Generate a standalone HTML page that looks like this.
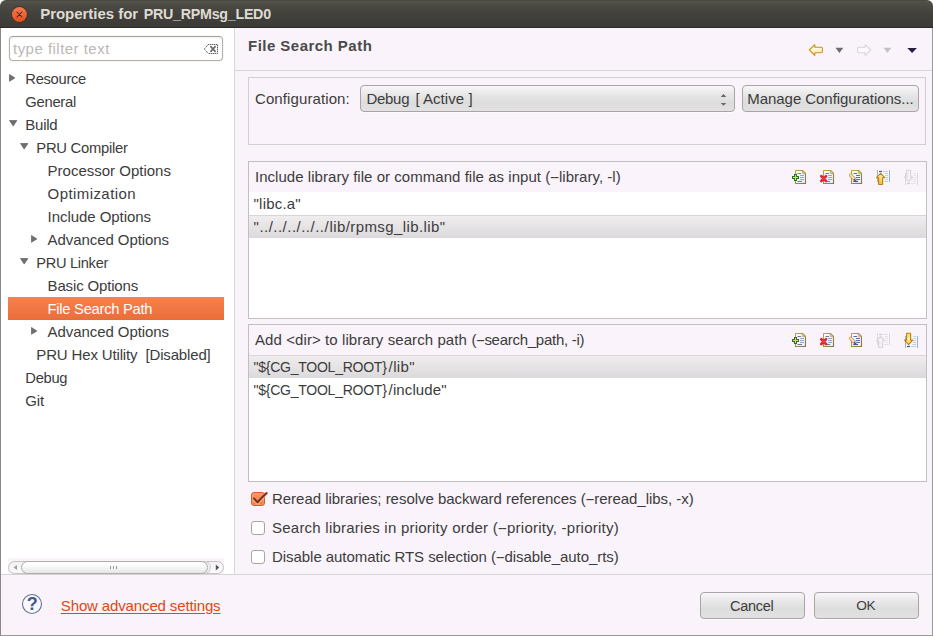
<!DOCTYPE html>
<html><head><meta charset="utf-8"><title>Properties</title>
<style>
html,body{margin:0;padding:0;}
body{width:933px;height:636px;overflow:hidden;background:#fff;font-family:"Liberation Sans",sans-serif;position:relative;}
.t{position:absolute;white-space:pre;line-height:20px;font-family:"Liberation Sans",sans-serif;}
.abs{position:absolute;}
</style></head><body>

<svg width="0" height="0" style="position:absolute"><defs>
<linearGradient id="docs" x1="0" y1="0" x2="1" y2="1"><stop offset="0" stop-color="#c9a242"/><stop offset="1" stop-color="#86743f"/></linearGradient>
<linearGradient id="docf" x1="0" y1="0" x2="1" y2="1"><stop offset="0" stop-color="#ffffff"/><stop offset="1" stop-color="#e4ebf8"/></linearGradient>
<linearGradient id="arr" x1="0" y1="0" x2="0" y2="1"><stop offset="0" stop-color="#fff8c8"/><stop offset="1" stop-color="#f7b92a"/></linearGradient>
<linearGradient id="arrd" x1="0" y1="0" x2="0" y2="1"><stop offset="0" stop-color="#fbd45a"/><stop offset="0.5" stop-color="#fff2b0"/><stop offset="1" stop-color="#f9c53a"/></linearGradient>
</defs></svg>
<div class="abs" style="left:0;top:0;width:933px;height:636px;background-color:#f9f3fa;background-image:repeating-conic-gradient(#fcf1fc 0% 25%, #f6f5f7 0% 50%);background-size:2px 2px;border-radius:6px 6px 0 0;"></div>
<div class="abs" style="left:0;top:0;width:933px;height:28px;border-radius:6px 6px 0 0;background:linear-gradient(#3f3e39 0,#54534b 1px,#4b4a43 5px,#42413c 14px,#3c3b37 26px);border-bottom:1px solid #2b2a27;box-sizing:border-box;"></div>
<svg class="abs" style="left:10px;top:5px" width="19" height="19" viewBox="0 0 19 19">
<defs><linearGradient id="cg" x1="0" y1="0" x2="0" y2="1"><stop offset="0" stop-color="#f47a52"/><stop offset="1" stop-color="#e54f1d"/></linearGradient></defs>
<circle cx="9.4" cy="9.5" r="8.2" fill="#35302b"/>
<circle cx="9.4" cy="9.5" r="7.5" fill="url(#cg)"/>
<path d="M6.9 7 L11.9 12 M11.9 7 L6.9 12" stroke="#4a2415" stroke-width="1.05" stroke-linecap="round"/>
</svg>
<div class="t" style="left:40.20px;top:3.60px;font-size:15px;font-weight:bold;color:#dfdbd2;letter-spacing:-0.028px;">Properties for</div>
<div class="t" style="left:143.80px;top:3.85px;font-size:14.29px;font-weight:bold;color:#dfdbd2;letter-spacing:-0.280px;">PRU_RPMsg_LED0</div>
<div style="position:absolute;left:1px;top:28px;width:233px;height:546px;background:#fff;"></div>
<div style="position:absolute;left:234px;top:28px;width:1px;height:546px;background:#dad6da;"></div>
<div style="position:absolute;left:0px;top:28px;width:1px;height:608px;background:#8a8784;"></div>
<div style="position:absolute;left:932px;top:28px;width:1px;height:608px;background:#9c9a98;"></div>
<div style="position:absolute;left:0px;top:635px;width:933px;height:1px;background:#9c9a98;"></div>
<div style="position:absolute;left:9px;top:36px;width:214px;height:25px;box-sizing:border-box;border:1px solid #b5afa8;border-top-color:#aaa49d;border-radius:4px;background:#fff;box-shadow:inset 0 1px 1px rgba(0,0,0,0.06), 0 0 0 1px rgba(120,100,120,0.05);"></div>
<div class="t" style="left:13.00px;top:39.10px;font-size:15px;font-weight:normal;color:#bdb8b4;letter-spacing:0.473px;">type filter text</div>
<svg class="abs" style="left:203px;top:43px" width="17" height="13" viewBox="0 0 17 13">
<path d="M5.2 1.5 H14.5 V10.5 H5.2 L1.3 6 Z" fill="#fff" stroke="#3c3c3c" stroke-width="1" stroke-dasharray="1.1 0.9"/>
<path d="M7.4 3.2 L12.6 8.8 M12.6 3.2 L7.4 8.8" stroke="#6c6c6c" stroke-width="1.7"/>
</svg>
<div class="t" style="left:25.30px;top:69.20px;font-size:14.71px;font-weight:normal;color:#3c3c3c;letter-spacing:-0.280px;">Resource</div>
<svg class="abs" style="left:9.1px;top:73.6px" width="7" height="8" viewBox="0 0 7 8"><path d="M0.5 0.5 L5.9 3.9 L0.5 7.3 Z" fill="#6f6f6f" stroke="#555" stroke-width="0.6"/></svg>
<div class="t" style="left:25.30px;top:92.17px;font-size:14.8px;font-weight:normal;color:#3c3c3c;letter-spacing:-0.280px;">General</div>
<div class="t" style="left:25.30px;top:115.10px;font-size:15px;font-weight:normal;color:#3c3c3c;letter-spacing:-0.240px;">Build</div>
<svg class="abs" style="left:8.7px;top:119.7px" width="9" height="7" viewBox="0 0 9 7"><path d="M0.5 0.5 L7.9 0.5 L4.2 6.1 Z" fill="#6f6f6f" stroke="#555" stroke-width="0.6"/></svg>
<div class="t" style="left:36.30px;top:138.16px;font-size:14.82px;font-weight:normal;color:#3c3c3c;letter-spacing:-0.280px;">PRU Compiler</div>
<svg class="abs" style="left:19.7px;top:142.7px" width="9" height="7" viewBox="0 0 9 7"><path d="M0.5 0.5 L7.9 0.5 L4.2 6.1 Z" fill="#6f6f6f" stroke="#555" stroke-width="0.6"/></svg>
<div class="t" style="left:47.60px;top:161.10px;font-size:15px;font-weight:normal;color:#3c3c3c;letter-spacing:-0.006px;">Processor Options</div>
<div class="t" style="left:47.60px;top:184.10px;font-size:15px;font-weight:normal;color:#3c3c3c;letter-spacing:0.420px;">Optimization</div>
<div class="t" style="left:47.60px;top:207.10px;font-size:15px;font-weight:normal;color:#3c3c3c;letter-spacing:-0.052px;">Include Options</div>
<div class="t" style="left:47.60px;top:230.10px;font-size:15px;font-weight:normal;color:#3c3c3c;letter-spacing:-0.072px;">Advanced Options</div>
<svg class="abs" style="left:31.0px;top:234.6px" width="7" height="8" viewBox="0 0 7 8"><path d="M0.5 0.5 L5.9 3.9 L0.5 7.3 Z" fill="#6f6f6f" stroke="#555" stroke-width="0.6"/></svg>
<div class="t" style="left:36.30px;top:253.24px;font-size:14.59px;font-weight:normal;color:#3c3c3c;letter-spacing:-0.280px;">PRU Linker</div>
<svg class="abs" style="left:19.7px;top:257.7px" width="9" height="7" viewBox="0 0 9 7"><path d="M0.5 0.5 L7.9 0.5 L4.2 6.1 Z" fill="#6f6f6f" stroke="#555" stroke-width="0.6"/></svg>
<div class="t" style="left:47.60px;top:276.10px;font-size:15px;font-weight:normal;color:#3c3c3c;letter-spacing:-0.162px;">Basic Options</div>
<div style="position:absolute;left:8px;top:297px;width:216px;height:23px;background:linear-gradient(#f68250,#f17743 50%,#eb6e3b 96%,#e76833);"></div>
<div class="t" style="left:47.60px;top:299.18px;font-size:14.77px;font-weight:normal;color:#fff;letter-spacing:-0.280px;">File Search Path</div>
<div class="t" style="left:47.60px;top:322.10px;font-size:15px;font-weight:normal;color:#3c3c3c;letter-spacing:-0.072px;">Advanced Options</div>
<svg class="abs" style="left:31.0px;top:326.6px" width="7" height="8" viewBox="0 0 7 8"><path d="M0.5 0.5 L5.9 3.9 L0.5 7.3 Z" fill="#6f6f6f" stroke="#555" stroke-width="0.6"/></svg>
<div class="t" style="left:36.30px;top:345.10px;font-size:15px;font-weight:normal;color:#3c3c3c;letter-spacing:-0.150px;">PRU Hex Utility  [Disabled]</div>
<div class="t" style="left:25.30px;top:368.20px;font-size:14.73px;font-weight:normal;color:#3c3c3c;letter-spacing:-0.280px;">Debug</div>
<div class="t" style="left:25.30px;top:391.10px;font-size:15px;font-weight:normal;color:#3c3c3c;letter-spacing:-0.186px;">Git</div>
<div style="position:absolute;left:8px;top:558px;width:216px;height:16px;background-color:#f9f3fa;background-image:repeating-conic-gradient(#fcf1fc 0% 25%, #f6f5f7 0% 50%);background-size:2px 2px;"></div>
<div style="position:absolute;left:8px;top:561px;width:216px;height:13px;box-sizing:border-box;border:1px solid #c6c2c4;border-radius:7px;background:linear-gradient(#f3f2f3,#fbfbfb);"></div>
<div style="position:absolute;left:196px;top:561px;width:15px;height:13px;box-sizing:border-box;border:1px solid #cfcbcd;border-left:none;border-radius:0 7px 7px 0;background:#efedef;"></div>
<div style="position:absolute;left:21px;top:561px;width:187px;height:13px;box-sizing:border-box;border:1px solid #b2aba8;border-radius:7px;background:linear-gradient(#ffffff 20%,#e7e5e7);"></div>
<svg class="abs" style="left:12px;top:563px" width="6" height="9" viewBox="0 0 6 9"><path d="M5 2 L1.6 4.5 L5 7 Z" fill="#a2a0a2"/></svg>
<svg class="abs" style="left:214px;top:563px" width="6" height="9" viewBox="0 0 6 9"><path d="M1.8 1.6 L5.2 4.5 L1.8 7.4 Z" fill="#555355"/></svg>
<div style="position:absolute;left:110px;top:566px;width:1px;height:3px;background:#9a9a9a;"></div>
<div style="position:absolute;left:113px;top:566px;width:1px;height:3px;background:#9a9a9a;"></div>
<div style="position:absolute;left:116px;top:566px;width:1px;height:3px;background:#9a9a9a;"></div>
<div class="t" style="left:248.00px;top:35.80px;font-size:15px;font-weight:bold;color:#4a4a4a;letter-spacing:0.472px;">File Search Path</div>
<div style="position:absolute;left:235px;top:70px;width:697px;height:1px;background:#d9d4da;"></div>
<svg class="abs" style="left:808px;top:43px" width="16" height="14" viewBox="0 0 16 14">
<defs><linearGradient id="yg" x1="0" y1="0" x2="0" y2="1"><stop offset="0" stop-color="#fffdf0"/><stop offset="1" stop-color="#fee9a4"/></linearGradient></defs>
<path d="M6.8 1.7 L1.3 7 L6.8 12.3 L6.8 9.7 L13.2 9.7 Q14.4 9.7 14.4 8.5 L14.4 5.5 Q14.4 4.3 13.2 4.3 L6.8 4.3 Z" fill="url(#yg)" stroke="#c9921c" stroke-width="1.1" stroke-linejoin="round"/></svg>
<svg class="abs" style="left:835px;top:47px" width="9" height="7" viewBox="0 0 9 7"><path d="M0.5 0.8 L8.3 0.8 L4.4 6 Z" fill="#6e6c70"/></svg>
<svg class="abs" style="left:856px;top:43px" width="16" height="14" viewBox="0 0 16 14">
<path d="M9.2 1.7 L14.7 7 L9.2 12.3 L9.2 9.7 L2.8 9.7 Q1.6 9.7 1.6 8.5 L1.6 5.5 Q1.6 4.3 2.8 4.3 L9.2 4.3 Z" fill="#fcfafd" stroke="#d9d5da" stroke-width="1.1" stroke-linejoin="round"/></svg>
<svg class="abs" style="left:883px;top:47px" width="9" height="7" viewBox="0 0 9 7"><path d="M0.5 0.8 L8.3 0.8 L4.4 6 Z" fill="#c4c1c6"/></svg>
<svg class="abs" style="left:907px;top:47px" width="11" height="7" viewBox="0 0 11 7"><path d="M0.3 0.9 L9.9 0.9 L5.1 6 Z" fill="#2a1c44"/></svg>
<div style="position:absolute;left:248px;top:77px;width:678px;height:68px;box-sizing:border-box;border:1px solid #d3ced4;"></div>
<div class="t" style="left:255.00px;top:89.20px;font-size:15px;font-weight:normal;color:#3c3c3c;letter-spacing:0.100px;">Configuration:</div>
<div style="position:absolute;left:360px;top:85px;width:375px;height:27px;box-sizing:border-box;border:1px solid #a9a4a6;border-radius:4px;background:linear-gradient(#f8f6f8 0%,#e8e7e8 35%,#dcdddc 65%,#e3e1e3 100%);box-shadow:0 1px 0 rgba(255,255,255,0.7);"></div>
<div class="t" style="left:366.50px;top:88.71px;font-size:14.97px;font-weight:normal;color:#3c3c3c;letter-spacing:-0.280px;">Debug</div>
<div class="t" style="left:415.40px;top:88.70px;font-size:15px;font-weight:normal;color:#3c3c3c;letter-spacing:0.055px;">[ Active ]</div>
<svg class="abs" style="left:720px;top:93px" width="7" height="14" viewBox="0 0 7 14"><path d="M0.7 3.9 L3.5 1 L6.3 3.9 Z M0.7 9.9 L3.5 12.8 L6.3 9.9 Z" fill="#686868"/></svg>
<div style="position:absolute;left:742px;top:85px;width:177px;height:27px;box-sizing:border-box;border:1px solid #a9a4a6;border-radius:4px;background:linear-gradient(#f8f6f8 0%,#e8e7e8 35%,#dcdddc 65%,#e3e1e3 100%);"></div>
<div class="t" style="left:747.30px;top:88.80px;font-size:15px;font-weight:normal;color:#3c3c3c;letter-spacing:-0.053px;">Manage Configurations...</div>
<div style="position:absolute;left:248px;top:161px;width:679px;height:158px;box-sizing:border-box;border:1px solid #c2bec1;"></div>
<div class="t" style="left:255.00px;top:167.00px;font-size:15px;font-weight:normal;color:#3c3c3c;letter-spacing:0.038px;">Include library file or command file as input (<span style="letter-spacing:-1.362px">-</span>-library, -l)</div>
<div style="position:absolute;left:249px;top:192px;width:677px;height:126px;background:#fff;"></div>
<div class="t" style="left:253.60px;top:193.80px;font-size:15px;font-weight:normal;color:#3c3c3c;letter-spacing:0.190px;">&quot;libc.a&quot;</div>
<div style="position:absolute;left:249px;top:215px;width:677px;height:23px;background:linear-gradient(#f0edf0 0%,#e7e4e5 45%,#dbd9dc 100%);border-top:1px solid #dad6d5;box-sizing:border-box;"></div>
<div class="t" style="left:253.60px;top:216.80px;font-size:15px;font-weight:normal;color:#3c3c3c;letter-spacing:0.477px;">&quot;../../../../../</div>
<div class="t" style="left:329.60px;top:216.80px;font-size:15px;font-weight:normal;color:#3c3c3c;letter-spacing:0.394px;">lib/rpmsg_lib.lib&quot;</div>
<svg class="abs" style="left:791px;top:169px" width="16" height="17" viewBox="0 0 16 17"><path d="M4.5 1.5 H11.5 L14.5 4.5 V14.5 H4.5 Z" fill="url(#docf)" stroke="url(#docs)" stroke-width="1.1" stroke-linejoin="round"/><path d="M11.3 1.8 V4.7 H14.2 Z" fill="#e6d39a" stroke="#b79a4a" stroke-width="0.6"/><path d="M6.5 4.5 H10" stroke="#5f7ab4" stroke-width="1"/><path d="M9 6.5 H13 M9 8.5 H13 M9 10.5 H13" stroke="#93a6d0" stroke-width="1"/><path d="M6.5 12.5 H11" stroke="#5f7ab4" stroke-width="1"/><path d="M3 5 H6 V7 H8 V10 H6 V12 H3 V10 H1 V7 H3 Z" fill="#1b7a30"/><path d="M4 6 H5 V8 H7 V9 H5 V11 H4 V9 H2 V8 H4 Z" fill="#cfe25c"/></svg><svg class="abs" style="left:819px;top:169px" width="16" height="17" viewBox="0 0 16 17"><path d="M4.5 1.5 H11.5 L14.5 4.5 V14.5 H4.5 Z" fill="url(#docf)" stroke="url(#docs)" stroke-width="1.1" stroke-linejoin="round"/><path d="M11.3 1.8 V4.7 H14.2 Z" fill="#e6d39a" stroke="#b79a4a" stroke-width="0.6"/><path d="M6.5 4.5 H10" stroke="#5f7ab4" stroke-width="1"/><path d="M9 6.5 H13 M9 8.5 H13 M9 10.5 H13" stroke="#93a6d0" stroke-width="1"/><path d="M6.5 12.5 H11" stroke="#5f7ab4" stroke-width="1"/><path d="M2.3 7.3 L7 12 M7 7.3 L2.3 12" stroke="#d9253a" stroke-width="2.7" stroke-linecap="round"/><path d="M2.9 7.9 L6.4 11.4 M6.4 7.9 L2.9 11.4" stroke="#ee5a68" stroke-width="1" stroke-linecap="butt" opacity="0.7"/></svg><svg class="abs" style="left:847px;top:169px" width="16" height="17" viewBox="0 0 16 17"><path d="M4.5 1.5 H11.5 L14.5 4.5 V14.5 H4.5 Z" fill="url(#docf)" stroke="url(#docs)" stroke-width="1.1" stroke-linejoin="round"/><path d="M11.3 1.8 V4.7 H14.2 Z" fill="#e6d39a" stroke="#b79a4a" stroke-width="0.6"/><path d="M6.5 4.5 H10" stroke="#4f6aa8" stroke-width="1"/><path d="M9 6.5 H13 M9 8.5 H13 M9 10.5 H13" stroke="#5872b0" stroke-width="1"/><path d="M6.5 12.5 H11" stroke="#4f6aa8" stroke-width="1"/><path d="M3.7 6.2 L8 10.6" stroke="#b48c48" stroke-width="3.4" stroke-linecap="round"/><path d="M3.7 6.2 L7.8 10.4" stroke="#f6e2b4" stroke-width="2.1" stroke-linecap="round"/><path d="M7.4 9.6 L9.6 12.4 L6.4 10.9 Z" fill="#2f3f66"/><path d="M6.5 12.5 H11" stroke="#3f5a9a" stroke-width="1.2"/></svg><svg class="abs" style="left:875px;top:169px" width="16" height="17" viewBox="0 0 16 17"><rect x="3" y="1" width="11" height="12" fill="#f2f5fc"/><path d="M2.5 1 V13 M14.5 1 V13" stroke="#9fb0cc" stroke-width="1"/><path d="M8 2.5 H13 M10 4.5 H13 M10.5 6.5 H13 M10.5 8.5 H13 M10.5 10.5 H13 M9 12.5 H13" stroke="#c3cce2" stroke-width="1"/><path d="M4 2.5 H7" stroke="#2f5fa8" stroke-width="1.2"/><path d="M5.6 4.3 L9.7 8.7 L7.6 8.7 L7.6 15 Q7.6 15.5 7.1 15.5 L4.1 15.5 Q3.6 15.5 3.6 15 L3.6 8.7 L1.5 8.7 Z" fill="url(#arr)" stroke="#c27f08" stroke-width="1.1" stroke-linejoin="round"/></svg><svg class="abs" style="left:903px;top:169px" width="16" height="17" viewBox="0 0 16 17"><path d="M2.5 4 V16 M14.5 4 V16" stroke="#dcd8de" stroke-width="1"/><path d="M10.5 4.5 H13 M10.5 6.5 H13 M10.5 8.5 H13 M10 10.5 H13 M9.5 12.5 H13 M8 14.5 H13" stroke="#e6e2e8" stroke-width="1"/><path d="M4 14.5 H7" stroke="#cfcbd2" stroke-width="1.2"/><path d="M5.6 12.6 L9.7 8.1 L7.6 8.1 L7.6 1.8 Q7.6 1.3 7.1 1.3 L4.1 1.3 Q3.6 1.3 3.6 1.8 L3.6 8.1 L1.5 8.1 Z" fill="#f4f0f5" stroke="#d9d5db" stroke-width="1.1" stroke-linejoin="round"/></svg>
<div style="position:absolute;left:248px;top:324px;width:679px;height:158px;box-sizing:border-box;border:1px solid #c2bec1;"></div>
<div class="t" style="left:255.00px;top:330.00px;font-size:15px;font-weight:normal;color:#3c3c3c;letter-spacing:0.084px;">Add &lt;dir&gt; to library search path</div>
<div class="t" style="left:471.60px;top:330.00px;font-size:15px;font-weight:normal;color:#3c3c3c;letter-spacing:-0.272px;">(<span style="letter-spacing:-1.672px">-</span>-search_path, -i)</div>
<div style="position:absolute;left:249px;top:355px;width:677px;height:126px;background:#fff;"></div>
<div style="position:absolute;left:249px;top:355px;width:677px;height:23px;background:linear-gradient(#f0edf0 0%,#e7e4e5 45%,#dbd9dc 100%);border-top:1px solid #dad6d5;box-sizing:border-box;"></div>
<div class="t" style="left:253.60px;top:357.13px;font-size:14.06px;font-weight:normal;color:#3c3c3c;letter-spacing:-0.280px;">&quot;${CG_TOOL_ROOT}</div>
<div class="t" style="left:388.60px;top:356.80px;font-size:15px;font-weight:normal;color:#3c3c3c;letter-spacing:0.375px;">/lib&quot;</div>
<div class="t" style="left:253.60px;top:380.13px;font-size:14.06px;font-weight:normal;color:#3c3c3c;letter-spacing:-0.280px;">&quot;${CG_TOOL_ROOT}</div>
<div class="t" style="left:388.60px;top:379.80px;font-size:15px;font-weight:normal;color:#3c3c3c;letter-spacing:0.121px;">/include&quot;</div>
<svg class="abs" style="left:791px;top:332px" width="16" height="17" viewBox="0 0 16 17"><path d="M4.5 1.5 H11.5 L14.5 4.5 V14.5 H4.5 Z" fill="url(#docf)" stroke="url(#docs)" stroke-width="1.1" stroke-linejoin="round"/><path d="M11.3 1.8 V4.7 H14.2 Z" fill="#e6d39a" stroke="#b79a4a" stroke-width="0.6"/><path d="M6.5 4.5 H10" stroke="#5f7ab4" stroke-width="1"/><path d="M9 6.5 H13 M9 8.5 H13 M9 10.5 H13" stroke="#93a6d0" stroke-width="1"/><path d="M6.5 12.5 H11" stroke="#5f7ab4" stroke-width="1"/><path d="M3 5 H6 V7 H8 V10 H6 V12 H3 V10 H1 V7 H3 Z" fill="#1b7a30"/><path d="M4 6 H5 V8 H7 V9 H5 V11 H4 V9 H2 V8 H4 Z" fill="#cfe25c"/></svg><svg class="abs" style="left:819px;top:332px" width="16" height="17" viewBox="0 0 16 17"><path d="M4.5 1.5 H11.5 L14.5 4.5 V14.5 H4.5 Z" fill="url(#docf)" stroke="url(#docs)" stroke-width="1.1" stroke-linejoin="round"/><path d="M11.3 1.8 V4.7 H14.2 Z" fill="#e6d39a" stroke="#b79a4a" stroke-width="0.6"/><path d="M6.5 4.5 H10" stroke="#5f7ab4" stroke-width="1"/><path d="M9 6.5 H13 M9 8.5 H13 M9 10.5 H13" stroke="#93a6d0" stroke-width="1"/><path d="M6.5 12.5 H11" stroke="#5f7ab4" stroke-width="1"/><path d="M2.3 7.3 L7 12 M7 7.3 L2.3 12" stroke="#d9253a" stroke-width="2.7" stroke-linecap="round"/><path d="M2.9 7.9 L6.4 11.4 M6.4 7.9 L2.9 11.4" stroke="#ee5a68" stroke-width="1" stroke-linecap="butt" opacity="0.7"/></svg><svg class="abs" style="left:847px;top:332px" width="16" height="17" viewBox="0 0 16 17"><path d="M4.5 1.5 H11.5 L14.5 4.5 V14.5 H4.5 Z" fill="url(#docf)" stroke="url(#docs)" stroke-width="1.1" stroke-linejoin="round"/><path d="M11.3 1.8 V4.7 H14.2 Z" fill="#e6d39a" stroke="#b79a4a" stroke-width="0.6"/><path d="M6.5 4.5 H10" stroke="#4f6aa8" stroke-width="1"/><path d="M9 6.5 H13 M9 8.5 H13 M9 10.5 H13" stroke="#5872b0" stroke-width="1"/><path d="M6.5 12.5 H11" stroke="#4f6aa8" stroke-width="1"/><path d="M3.7 6.2 L8 10.6" stroke="#b48c48" stroke-width="3.4" stroke-linecap="round"/><path d="M3.7 6.2 L7.8 10.4" stroke="#f6e2b4" stroke-width="2.1" stroke-linecap="round"/><path d="M7.4 9.6 L9.6 12.4 L6.4 10.9 Z" fill="#2f3f66"/><path d="M6.5 12.5 H11" stroke="#3f5a9a" stroke-width="1.2"/></svg><svg class="abs" style="left:875px;top:332px" width="16" height="17" viewBox="0 0 16 17"><path d="M2.5 1 V13 M14.5 1 V13" stroke="#dcd8de" stroke-width="1"/><path d="M8 2.5 H13 M10 4.5 H13 M10.5 6.5 H13 M10.5 8.5 H13 M10.5 10.5 H13 M9 12.5 H13" stroke="#e6e2e8" stroke-width="1"/><path d="M4 2.5 H7" stroke="#cfcbd2" stroke-width="1.2"/><path d="M5.6 4.3 L9.7 8.7 L7.6 8.7 L7.6 15 Q7.6 15.5 7.1 15.5 L4.1 15.5 Q3.6 15.5 3.6 15 L3.6 8.7 L1.5 8.7 Z" fill="#f4f0f5" stroke="#d9d5db" stroke-width="1.1" stroke-linejoin="round"/></svg><svg class="abs" style="left:903px;top:332px" width="16" height="17" viewBox="0 0 16 17"><rect x="3" y="4" width="11" height="12" fill="#f2f5fc"/><path d="M2.5 4 V16 M14.5 4 V16" stroke="#9fb0cc" stroke-width="1"/><path d="M10.5 4.5 H13 M10.5 6.5 H13 M10.5 8.5 H13 M10 10.5 H13 M9.5 12.5 H13 M8 14.5 H13" stroke="#c3cce2" stroke-width="1"/><path d="M4 14.5 H7" stroke="#2f5fa8" stroke-width="1.2"/><path d="M5.6 12.6 L9.7 8.1 L7.6 8.1 L7.6 1.8 Q7.6 1.3 7.1 1.3 L4.1 1.3 Q3.6 1.3 3.6 1.8 L3.6 8.1 L1.5 8.1 Z" fill="url(#arrd)" stroke="#c27f08" stroke-width="1.1" stroke-linejoin="round"/></svg>
<div style="position:absolute;left:251px;top:492px;width:14px;height:14px;box-sizing:border-box;border:1px solid #d85a2c;border-radius:3px;background:linear-gradient(#f9976a,#f17b45);box-shadow:inset 0 0 0 1px rgba(255,190,150,0.35);"></div>
<svg class="abs" style="left:251px;top:491px" width="18" height="16" viewBox="0 0 18 16"><path d="M3 7.9 L6.6 11.3 L15.4 2.3" fill="none" stroke="#fbd0b8" stroke-width="3" stroke-linecap="round" stroke-linejoin="round" opacity="0.55" transform="translate(0,0.9)"/><path d="M3 7.6 L6.6 11.2 L11 6.4 L15.6 2.1" fill="none" stroke="#7a3318" stroke-width="2.1" stroke-linecap="round" stroke-linejoin="round"/></svg>
<div class="t" style="left:272.00px;top:489.10px;font-size:15px;font-weight:normal;color:#3c3c3c;letter-spacing:-0.032px;">Reread libraries; resolve backward references (<span style="letter-spacing:-1.432px">-</span>-reread_libs, -x)</div>
<div style="position:absolute;left:251px;top:521px;width:14px;height:14px;box-sizing:border-box;border:1px solid #aaa4a2;border-radius:3px;background:#fff;"></div>
<div class="t" style="left:272.00px;top:518.10px;font-size:15px;font-weight:normal;color:#3c3c3c;letter-spacing:0.233px;">Search libraries in priority order (<span style="letter-spacing:-1.167px">-</span>-priority, -priority)</div>
<div style="position:absolute;left:251px;top:550px;width:14px;height:14px;box-sizing:border-box;border:1px solid #aaa4a2;border-radius:3px;background:#fff;"></div>
<div class="t" style="left:272.00px;top:547.10px;font-size:15px;font-weight:normal;color:#3c3c3c;letter-spacing:-0.051px;">Disable automatic RTS selection (<span style="letter-spacing:-1.451px">-</span>-disable_auto_rts)</div>
<div style="position:absolute;left:1px;top:574px;width:931px;height:1px;background:#d6d2d7;"></div>
<svg class="abs" style="left:21px;top:593px" width="22" height="22" viewBox="0 0 22 22">
<circle cx="11" cy="11" r="9.5" fill="#fbf8fd" stroke="#5d7598" stroke-width="1.1"/>
<text x="11.2" y="17.4" text-anchor="middle" font-family="Liberation Sans" font-weight="bold" font-size="18" fill="#3f5a8a">?</text></svg>
<div class="t" style="left:60.80px;top:595.60px;font-size:15px;font-weight:normal;color:#dd4814;letter-spacing:-0.134px;text-decoration:underline;text-underline-offset:2px;">Show advanced settings</div>
<div style="position:absolute;left:700px;top:592px;width:105px;height:27px;box-sizing:border-box;border:1px solid #a9a4a6;border-radius:4px;background:linear-gradient(#f8f6f8 0%,#e8e7e8 35%,#dcdddc 65%,#e3e1e3 100%);box-shadow:0 1px 0 rgba(255,255,255,0.8);"></div>
<div class="t" style="left:730.00px;top:595.98px;font-size:14.49px;font-weight:normal;color:#3c3c3c;letter-spacing:-0.280px;">Cancel</div>
<div style="position:absolute;left:814px;top:592px;width:105px;height:27px;box-sizing:border-box;border:1px solid #a9a4a6;border-radius:4px;background:linear-gradient(#f8f6f8 0%,#e8e7e8 35%,#dcdddc 65%,#e3e1e3 100%);box-shadow:0 1px 0 rgba(255,255,255,0.8);"></div>
<div class="t" style="left:856.20px;top:596.26px;font-size:13.68px;font-weight:normal;color:#3c3c3c;letter-spacing:-0.280px;">OK</div>
</body></html>
